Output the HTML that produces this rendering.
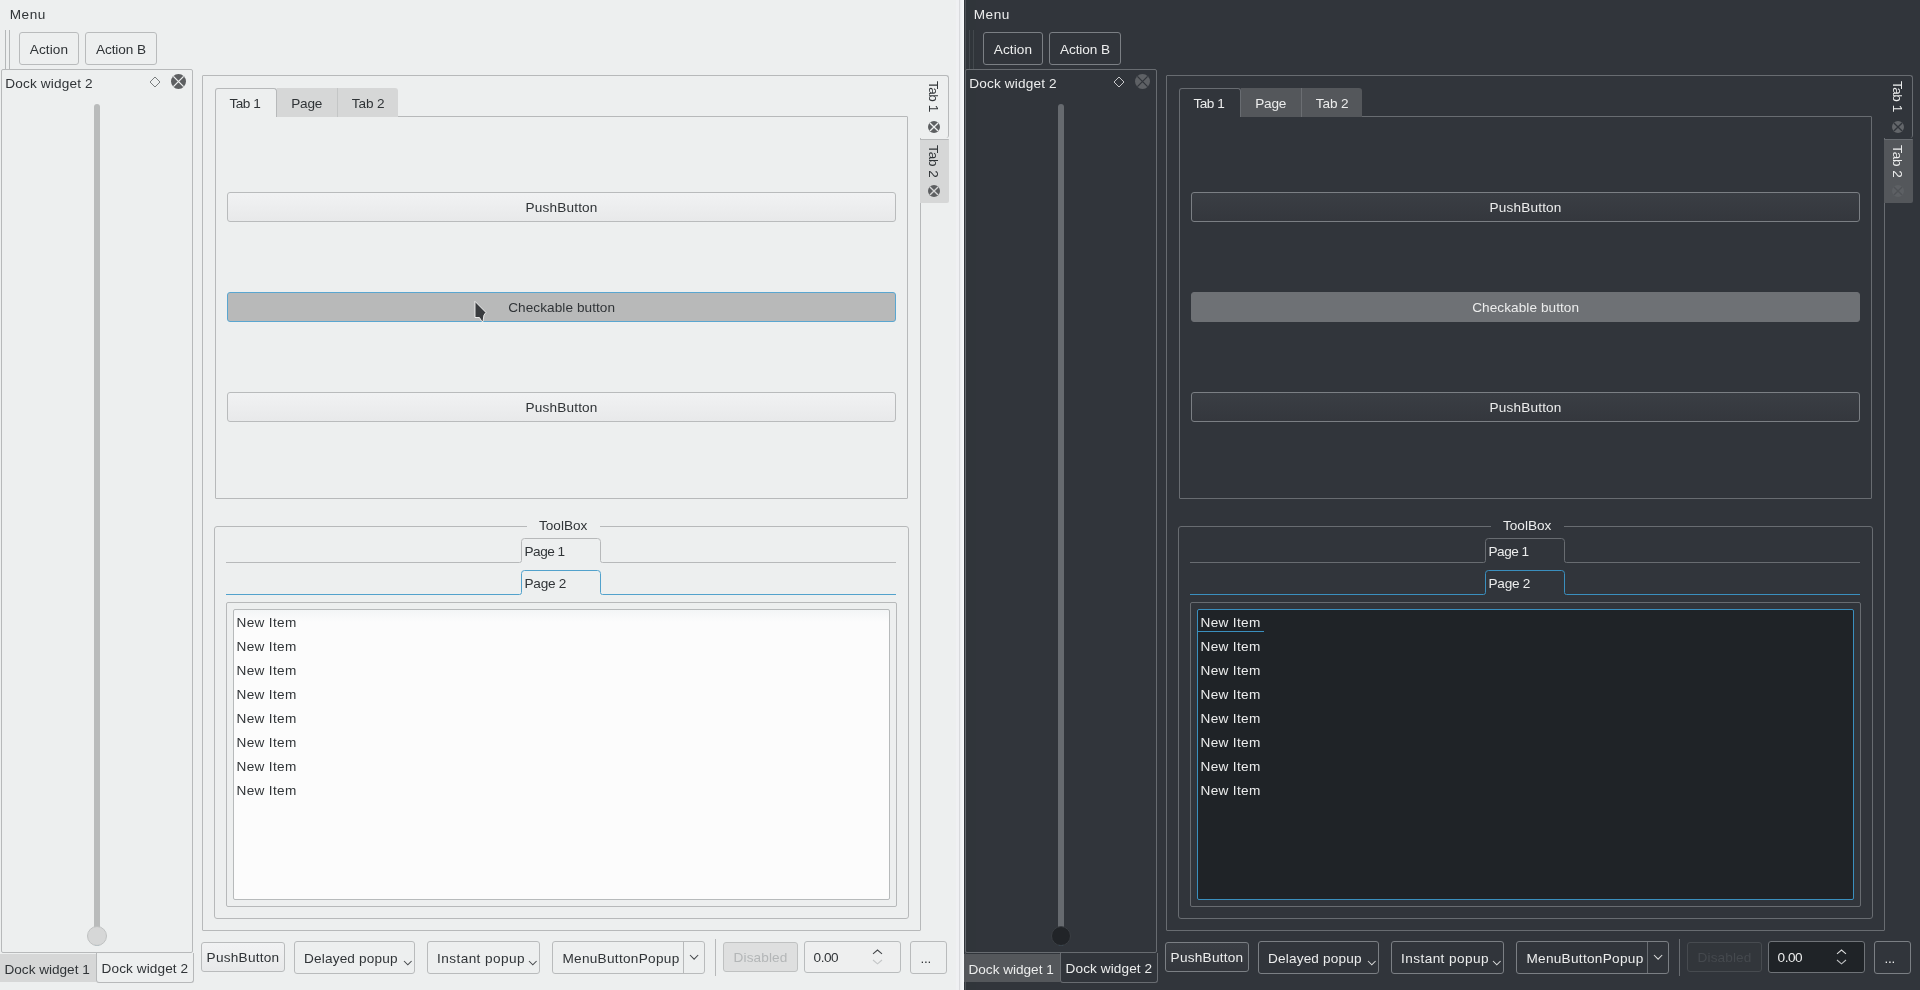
<!DOCTYPE html>
<html><head><meta charset="utf-8"><title>Breeze widgets</title>
<style>
html,body{margin:0;padding:0}
body{width:1920px;height:990px;overflow:hidden;position:relative;background:#31353b;font-family:"Liberation Sans", sans-serif;font-size:13.6px;line-height:16px}
.pane{position:absolute;top:0;height:990px;overflow:hidden;background:var(--bg);color:var(--fg)}
.pane *{position:absolute;box-sizing:border-box}
.light{left:0;width:964px;
 --bg:#edefef;--fg:#303437;--bd:#b7b9ba;--btnbd:#b9bbbc;--btn1:#f1f2f3;--btn2:#e8e9ea;--tabu:#d6d7d7;--tabsep:#c4c6c6;
 --view:#fcfcfc;--viewtop:#f3f5f6;--groove:#b9bbbb;--handle:#d6d7d7;--handlebd:#bfc1c1;--icon:#5d5f61;--iconx:#edefef;--dia:#6c6f71;
 --checked:#b8b9b9;--checkedbd:#5aa6d0;--hl:#52a2cc;--dis:#dedfdf;--disbd:#bfc1c1;--distxt:#b3b6b7;--chdis:#c3c6c7;--spin:#eeefef;--spinbd:#b9bcbd;--cl2:#5d5f61;--cl2x:#d6d7d7;--dockcl:#5d5f61;--viewbd:#b7babb;--chev:#44474a;--hline:#b4b7b8}
.dark{left:964px;width:956px;
 --bg:#31353b;--fg:#eceded;--bd:#686c71;--btnbd:#7b7f84;--btn1:#3a3e44;--btn2:#34373d;--tabu:#54575b;--tabsep:#6b6e72;
 --view:#1f2327;--viewtop:#1f2327;--groove:#666a6f;--handle:#212428;--handlebd:#3a3e43;--icon:#63666a;--iconx:#31353b;--dia:#d8d9da;
 --checked:#6e7175;--checkedbd:#6e7175;--hl:#3a8fbe;--dis:#32363b;--disbd:#474b50;--distxt:#45494e;--chdis:#bfc1c3;--spin:#1f2327;--spinbd:#6f7378;--cl2:#5d6064;--cl2x:#4f5256;--dockcl:#5e6165;--viewbd:#3a8fbe;--chev:#dcdddd;--hline:#43484d}
.layer{left:0;top:0;width:100%;height:100%;will-change:transform}
.t{white-space:nowrap;color:var(--fg)}
.t.rot{transform-origin:0 0;transform:rotate(90deg) translateY(-100%);}
.ln{background:var(--bd)}
.hln{background:var(--hline)}
.frame{border:1px solid var(--bd);border-radius:1px}
.frame.r3{border-radius:3px}
.frame.r2{border-radius:2px}
.btn{border:1px solid var(--btnbd);border-radius:3px;background:linear-gradient(var(--btn1),var(--btn2))}
.btn.flat{background:var(--bg)}
.btn.checked{background:var(--checked);border-color:var(--checkedbd)}
.btn.dis{background:var(--dis);border-color:var(--disbd)}
.distxt{color:var(--distxt)}
.spin{border:1px solid var(--spinbd);border-radius:3px;background:var(--spin)}
.tabu{background:var(--tabu)}
.docktabsel{border:1px solid var(--bd);border-top:none;border-radius:0 0 3px 3px}
.etabsel{border:1px solid var(--bd);border-left:none;border-bottom:none;border-radius:0 3px 3px 0;background:var(--bg)}
.etabu{background:var(--tabu);border-top:1px solid var(--bd);border-radius:0 1px 2px 0}
.ntabsel{border:1px solid var(--bd);border-bottom:none;border-radius:3px 3px 0 0;background:var(--bg)}
.ntabu{background:var(--tabu);border-radius:3px 3px 0 0}
.gap{background:var(--bg)}
.tbp{stroke:var(--bd);stroke-width:1;fill:none}
.hl .tbp{stroke:var(--hl)}
.view{border:1px solid var(--viewbd);border-radius:2px;background:linear-gradient(var(--viewtop),var(--view) 12px)}
.groove{background:var(--groove);border-radius:3px}
.groovefill{background:var(--hl);border-radius:0 0 3px 3px}
.handle{border-radius:50%;background:var(--handle);border:1px solid var(--handlebd)}
.ic{overflow:visible}
.ic.clip{overflow:hidden}
.clf{fill:var(--icon)}
.cl2 .clf{fill:var(--cl2)}
.dockcl .clf{fill:var(--dockcl)}
.cl2 .clx{stroke:var(--cl2x)}
.clx{stroke:var(--iconx);stroke-width:1.3;fill:none}
.dia{stroke:var(--dia);stroke-width:0.9;fill:none}
.chev{stroke:var(--chev);stroke-width:1.05;fill:none}
.chdis .chev{stroke:var(--chdis)}
.strip{left:960px;top:0;width:4px;height:990px;background:linear-gradient(90deg,#eaecee,#f7f9fb)}
.stripp{left:956px;top:0;width:3px;height:990px;background:#f0f1f3}
.stripl{left:959px;top:0;width:1px;height:990px;background:#d9dadd}
.ul{display:none;background:var(--hl)}
.dark .ul{display:block}
</style></head>
<body>
<div class="pane light"><div class="layer">
<span class="t " style="left:9.70px;top:7.09px;letter-spacing:0.552px;">Menu</span>
<div class="hln" style="left:5px;top:30px;width:1px;height:39px;"></div>
<div class="hln" style="left:9px;top:30px;width:1px;height:39px;"></div>
<div class="btn flat" style="left:19px;top:32px;width:60px;height:33px;"></div>
<span class="t " style="left:29.80px;top:41.99px;letter-spacing:0.076px;">Action</span>
<div class="btn flat" style="left:85px;top:32px;width:72px;height:33px;"></div>
<span class="t " style="left:96.00px;top:41.99px;letter-spacing:-0.094px;">Action B</span>
<div class="frame r2" style="left:1px;top:69px;width:192px;height:884px;"></div>
<span class="t " style="left:5.30px;top:75.89px;letter-spacing:0.157px;">Dock widget 2</span>
<svg class="ic" style="left:148px;top:75px" width="14" height="14" viewBox="-7 -7 14 14"><path d="M0 -5L5 0L0 5L-5 0Z" class="dia"/></svg>
<svg class="ic cl dockcl" style="left:169.70px;top:73.30px" width="17.0" height="17.0" viewBox="-8.5 -8.5 17.0 17.0"><circle cx="0" cy="0" r="7.5" class="clf"/><path d="M-5.10 -5.10L5.10 5.10M5.10 -5.10L-5.10 5.10" class="clx"/></svg>
<div class="groove" style="left:94px;top:104px;width:6px;height:838px;"></div>
<div class="groovefill" style="left:94px;top:938px;width:6px;height:8px;"></div>
<div class="handle" style="left:87px;top:926.3px;width:20px;height:20px;"></div>
<div class="tabu" style="left:0px;top:954px;width:96px;height:28px;"></div>
<span class="t " style="left:4.50px;top:961.89px;letter-spacing:-0.010px;">Dock widget 1</span>
<div class="docktabsel" style="left:96px;top:953px;width:98px;height:30px;"></div>
<span class="t " style="left:101.60px;top:960.79px;letter-spacing:0.098px;">Dock widget 2</span>
<div class="frame" style="left:202px;top:75px;width:719px;height:856px;"></div>
<div class="etabsel" style="left:920px;top:75px;width:29px;height:63px;"></div>
<div class="etabu" style="left:920px;top:139px;width:29px;height:64px;"></div>
<span class="t rot" style="left:925.11px;top:81.30px;letter-spacing:-0.500px;">Tab 1</span>
<span class="t rot" style="left:925.11px;top:145.20px;letter-spacing:-0.123px;">Tab 2</span>
<svg class="ic cl" style="left:927.00px;top:120.00px" width="14" height="14" viewBox="-7 -7 14 14"><circle cx="0" cy="0" r="6" class="clf"/><path d="M-4.08 -4.08L4.08 4.08M4.08 -4.08L-4.08 4.08" class="clx"/></svg>
<svg class="ic cl cl2" style="left:927.00px;top:183.60px" width="14" height="14" viewBox="-7 -7 14 14"><circle cx="0" cy="0" r="6" class="clf"/><path d="M-4.08 -4.08L4.08 4.08M4.08 -4.08L-4.08 4.08" class="clx"/></svg>
<div class="frame" style="left:215px;top:116px;width:693px;height:383px;"></div>
<div class="ntabsel" style="left:215px;top:88px;width:62px;height:29px;"></div>
<div class="ntabu" style="left:277px;top:88px;width:60px;height:28.5px;border-radius:0;"></div>
<div class="ntabu" style="left:337px;top:88px;width:61px;height:28.5px;border-left:1px solid var(--tabsep);border-radius:0 3px 0 0;"></div>
<span class="t " style="left:229.40px;top:96.19px;letter-spacing:-0.473px;">Tab 1</span>
<span class="t " style="left:291.20px;top:96.19px;letter-spacing:-0.196px;">Page</span>
<span class="t " style="left:351.80px;top:96.19px;letter-spacing:-0.123px;">Tab 2</span>
<div class="btn" style="left:227px;top:192px;width:669px;height:30px;"></div>
<span class="t " style="left:525.60px;top:199.99px;letter-spacing:0.164px;">PushButton</span>
<div class="btn checked" style="left:227px;top:292px;width:669px;height:30px;"></div>
<span class="t " style="left:508.20px;top:299.99px;letter-spacing:0.070px;">Checkable button</span>
<div class="btn" style="left:227px;top:392px;width:669px;height:30px;"></div>
<span class="t " style="left:525.60px;top:399.99px;letter-spacing:0.164px;">PushButton</span>
<div class="frame r3" style="left:214px;top:526px;width:695px;height:393px;"></div>
<div class="gap" style="left:527px;top:525px;width:73px;height:3px;"></div>
<span class="t " style="left:539.00px;top:517.89px;letter-spacing:-0.011px;">ToolBox</span>
<svg class="ic " style="left:0;top:0" width="964" height="990" viewBox="0 0 964 990"><path d="M226 562.5H519.5Q521.5 562.5 521.5 560.5V541.5Q521.5 538.5 524.5 538.5H597.5Q600.5 538.5 600.5 541.5V560.5Q600.5 562.5 602.5 562.5H896" class="tbp"/></svg>
<span class="t " style="left:524.50px;top:543.99px;letter-spacing:-0.500px;">Page 1</span>
<svg class="ic hl" style="left:0;top:0" width="964" height="990" viewBox="0 0 964 990"><path d="M226 594.5H519.5Q521.5 594.5 521.5 592.5V573.5Q521.5 570.5 524.5 570.5H597.5Q600.5 570.5 600.5 573.5V592.5Q600.5 594.5 602.5 594.5H896" class="tbp"/></svg>
<span class="t " style="left:524.50px;top:575.89px;letter-spacing:-0.245px;">Page 2</span>
<div class="frame r2" style="left:226px;top:602px;width:671px;height:305px;"></div>
<div class="view" style="left:233px;top:609px;width:657px;height:291px;"><span class="t first" style="left:2.60px;top:4.89px;letter-spacing:0.316px;">New Item</span><span class="t " style="left:2.60px;top:28.89px;letter-spacing:0.316px;">New Item</span><span class="t " style="left:2.60px;top:52.89px;letter-spacing:0.316px;">New Item</span><span class="t " style="left:2.60px;top:76.89px;letter-spacing:0.316px;">New Item</span><span class="t " style="left:2.60px;top:100.89px;letter-spacing:0.316px;">New Item</span><span class="t " style="left:2.60px;top:124.89px;letter-spacing:0.316px;">New Item</span><span class="t " style="left:2.60px;top:148.89px;letter-spacing:0.316px;">New Item</span><span class="t " style="left:2.60px;top:172.89px;letter-spacing:0.316px;">New Item</span><div class="ul" style="left:0px;top:21px;width:66px;height:1px;"></div></div>
<div class="btn" style="left:201px;top:942px;width:84px;height:30px;"></div>
<span class="t " style="left:206.60px;top:949.99px;letter-spacing:0.253px;">PushButton</span>
<div class="btn flat" style="left:294px;top:941px;width:121px;height:33px;"></div>
<span class="t " style="left:304.10px;top:950.79px;letter-spacing:0.159px;">Delayed popup</span>
<svg class="ic " style="left:401.70px;top:959.20px" width="11.6" height="7.8" viewBox="-5.8 -3.9 11.6 7.8"><path d="M-3.8 -1.9L0 1.9L3.8 -1.9" class="chev"/></svg>
<div class="btn flat" style="left:427px;top:941px;width:113px;height:33px;"></div>
<span class="t " style="left:437.00px;top:950.89px;letter-spacing:0.431px;">Instant popup</span>
<svg class="ic " style="left:526.50px;top:959.20px" width="11.6" height="7.8" viewBox="-5.8 -3.9 11.6 7.8"><path d="M-3.8 -1.9L0 1.9L3.8 -1.9" class="chev"/></svg>
<div class="btn flat" style="left:552px;top:941px;width:153px;height:33px;"></div>
<div class="ln" style="left:683px;top:942px;width:1px;height:31px;"></div>
<span class="t " style="left:562.40px;top:950.99px;letter-spacing:0.303px;">MenuButtonPopup</span>
<svg class="ic " style="left:688.10px;top:953.20px" width="12.2" height="8.2" viewBox="-6.1 -4.1 12.2 8.2"><path d="M-4.1 -2.1L0 2.1L4.1 -2.1" class="chev"/></svg>
<div class="ln" style="left:715px;top:939px;width:1px;height:37px;"></div>
<div class="btn dis" style="left:723px;top:942px;width:75px;height:30px;"></div>
<span class="t distxt" style="left:733.60px;top:950.09px;letter-spacing:0.124px;">Disabled</span>
<div class="spin" style="left:804px;top:941px;width:97px;height:32px;"></div>
<span class="t " style="left:813.60px;top:950.09px;letter-spacing:-0.500px;">0.00</span>
<svg class="ic " style="left:870.60px;top:948.20px" width="13" height="7.8" viewBox="-6.5 -3.9 13 7.8"><path d="M-4.5 1.9L0 -1.9L4.5 1.9" class="chev"/></svg>
<svg class="ic chdis" style="left:870.60px;top:958.20px" width="13" height="7.8" viewBox="-6.5 -3.9 13 7.8"><path d="M-4.5 -1.9L0 1.9L4.5 -1.9" class="chev"/></svg>
<div class="btn flat" style="left:910px;top:941px;width:37px;height:33px;"></div>
<span class="t " style="left:920.40px;top:951.19px;letter-spacing:-0.227px;">...</span>
<svg class="ic" style="left:470px;top:297.2px;overflow:hidden" width="22" height="24.5" viewBox="0 0 22 24.5"><path d="M5 4.4L5 20.5L9.4 20.5L12 24.6L13 24.6L13.9 18.3L15.9 15.4Z" fill="#3a3c3f" stroke="#f6f6f6" stroke-width="0.9" stroke-linejoin="round"/></svg>
</div>
<div class="stripp"></div><div class="stripl"></div><div class="strip"></div>
</div>
<div class="pane dark">
<div style="left:0;top:0;width:12px;height:990px;background:#30353a"></div><div style="left:1px;top:0;width:1px;height:990px;background:#4e5257"></div>
<div class="layer">
<span class="t " style="left:9.70px;top:7.09px;letter-spacing:0.552px;">Menu</span>
<div class="hln" style="left:5px;top:30px;width:1px;height:39px;"></div>
<div class="hln" style="left:9px;top:30px;width:1px;height:39px;"></div>
<div class="btn flat" style="left:19px;top:32px;width:60px;height:33px;"></div>
<span class="t " style="left:29.80px;top:41.99px;letter-spacing:0.076px;">Action</span>
<div class="btn flat" style="left:85px;top:32px;width:72px;height:33px;"></div>
<span class="t " style="left:96.00px;top:41.99px;letter-spacing:-0.094px;">Action B</span>
<div class="frame r2" style="left:1px;top:69px;width:192px;height:884px;"></div>
<span class="t " style="left:5.30px;top:75.89px;letter-spacing:0.157px;">Dock widget 2</span>
<svg class="ic" style="left:148px;top:75px" width="14" height="14" viewBox="-7 -7 14 14"><path d="M0 -5L5 0L0 5L-5 0Z" class="dia"/></svg>
<svg class="ic cl dockcl" style="left:169.70px;top:73.30px" width="17.0" height="17.0" viewBox="-8.5 -8.5 17.0 17.0"><circle cx="0" cy="0" r="7.5" class="clf"/><path d="M-5.10 -5.10L5.10 5.10M5.10 -5.10L-5.10 5.10" class="clx"/></svg>
<div class="groove" style="left:94px;top:104px;width:6px;height:838px;"></div>
<div class="groovefill" style="left:94px;top:938px;width:6px;height:8px;"></div>
<div class="handle" style="left:87px;top:926.3px;width:20px;height:20px;"></div>
<div class="tabu" style="left:0px;top:954px;width:96px;height:28px;"></div>
<span class="t " style="left:4.50px;top:961.89px;letter-spacing:-0.010px;">Dock widget 1</span>
<div class="docktabsel" style="left:96px;top:953px;width:98px;height:30px;"></div>
<span class="t " style="left:101.60px;top:960.79px;letter-spacing:0.098px;">Dock widget 2</span>
<div class="frame" style="left:202px;top:75px;width:719px;height:856px;"></div>
<div class="etabsel" style="left:920px;top:75px;width:29px;height:63px;"></div>
<div class="etabu" style="left:920px;top:139px;width:29px;height:64px;"></div>
<span class="t rot" style="left:925.11px;top:81.30px;letter-spacing:-0.500px;">Tab 1</span>
<span class="t rot" style="left:925.11px;top:145.20px;letter-spacing:-0.123px;">Tab 2</span>
<svg class="ic cl" style="left:927.00px;top:120.00px" width="14" height="14" viewBox="-7 -7 14 14"><circle cx="0" cy="0" r="6" class="clf"/><path d="M-4.08 -4.08L4.08 4.08M4.08 -4.08L-4.08 4.08" class="clx"/></svg>
<svg class="ic cl cl2" style="left:927.00px;top:183.60px" width="14" height="14" viewBox="-7 -7 14 14"><circle cx="0" cy="0" r="6" class="clf"/><path d="M-4.08 -4.08L4.08 4.08M4.08 -4.08L-4.08 4.08" class="clx"/></svg>
<div class="frame" style="left:215px;top:116px;width:693px;height:383px;"></div>
<div class="ntabsel" style="left:215px;top:88px;width:62px;height:29px;"></div>
<div class="ntabu" style="left:277px;top:88px;width:60px;height:28.5px;border-radius:0;"></div>
<div class="ntabu" style="left:337px;top:88px;width:61px;height:28.5px;border-left:1px solid var(--tabsep);border-radius:0 3px 0 0;"></div>
<span class="t " style="left:229.40px;top:96.19px;letter-spacing:-0.473px;">Tab 1</span>
<span class="t " style="left:291.20px;top:96.19px;letter-spacing:-0.196px;">Page</span>
<span class="t " style="left:351.80px;top:96.19px;letter-spacing:-0.123px;">Tab 2</span>
<div class="btn" style="left:227px;top:192px;width:669px;height:30px;"></div>
<span class="t " style="left:525.60px;top:199.99px;letter-spacing:0.164px;">PushButton</span>
<div class="btn checked" style="left:227px;top:292px;width:669px;height:30px;"></div>
<span class="t " style="left:508.20px;top:299.99px;letter-spacing:0.070px;">Checkable button</span>
<div class="btn" style="left:227px;top:392px;width:669px;height:30px;"></div>
<span class="t " style="left:525.60px;top:399.99px;letter-spacing:0.164px;">PushButton</span>
<div class="frame r3" style="left:214px;top:526px;width:695px;height:393px;"></div>
<div class="gap" style="left:527px;top:525px;width:73px;height:3px;"></div>
<span class="t " style="left:539.00px;top:517.89px;letter-spacing:-0.011px;">ToolBox</span>
<svg class="ic " style="left:0;top:0" width="964" height="990" viewBox="0 0 964 990"><path d="M226 562.5H519.5Q521.5 562.5 521.5 560.5V541.5Q521.5 538.5 524.5 538.5H597.5Q600.5 538.5 600.5 541.5V560.5Q600.5 562.5 602.5 562.5H896" class="tbp"/></svg>
<span class="t " style="left:524.50px;top:543.99px;letter-spacing:-0.500px;">Page 1</span>
<svg class="ic hl" style="left:0;top:0" width="964" height="990" viewBox="0 0 964 990"><path d="M226 594.5H519.5Q521.5 594.5 521.5 592.5V573.5Q521.5 570.5 524.5 570.5H597.5Q600.5 570.5 600.5 573.5V592.5Q600.5 594.5 602.5 594.5H896" class="tbp"/></svg>
<span class="t " style="left:524.50px;top:575.89px;letter-spacing:-0.245px;">Page 2</span>
<div class="frame r2" style="left:226px;top:602px;width:671px;height:305px;"></div>
<div class="view" style="left:233px;top:609px;width:657px;height:291px;"><span class="t first" style="left:2.60px;top:4.89px;letter-spacing:0.316px;">New Item</span><span class="t " style="left:2.60px;top:28.89px;letter-spacing:0.316px;">New Item</span><span class="t " style="left:2.60px;top:52.89px;letter-spacing:0.316px;">New Item</span><span class="t " style="left:2.60px;top:76.89px;letter-spacing:0.316px;">New Item</span><span class="t " style="left:2.60px;top:100.89px;letter-spacing:0.316px;">New Item</span><span class="t " style="left:2.60px;top:124.89px;letter-spacing:0.316px;">New Item</span><span class="t " style="left:2.60px;top:148.89px;letter-spacing:0.316px;">New Item</span><span class="t " style="left:2.60px;top:172.89px;letter-spacing:0.316px;">New Item</span><div class="ul" style="left:0px;top:21px;width:66px;height:1px;"></div></div>
<div class="btn" style="left:201px;top:942px;width:84px;height:30px;"></div>
<span class="t " style="left:206.60px;top:949.99px;letter-spacing:0.253px;">PushButton</span>
<div class="btn flat" style="left:294px;top:941px;width:121px;height:33px;"></div>
<span class="t " style="left:304.10px;top:950.79px;letter-spacing:0.159px;">Delayed popup</span>
<svg class="ic " style="left:401.70px;top:959.20px" width="11.6" height="7.8" viewBox="-5.8 -3.9 11.6 7.8"><path d="M-3.8 -1.9L0 1.9L3.8 -1.9" class="chev"/></svg>
<div class="btn flat" style="left:427px;top:941px;width:113px;height:33px;"></div>
<span class="t " style="left:437.00px;top:950.89px;letter-spacing:0.431px;">Instant popup</span>
<svg class="ic " style="left:526.50px;top:959.20px" width="11.6" height="7.8" viewBox="-5.8 -3.9 11.6 7.8"><path d="M-3.8 -1.9L0 1.9L3.8 -1.9" class="chev"/></svg>
<div class="btn flat" style="left:552px;top:941px;width:153px;height:33px;"></div>
<div class="ln" style="left:683px;top:942px;width:1px;height:31px;"></div>
<span class="t " style="left:562.40px;top:950.99px;letter-spacing:0.303px;">MenuButtonPopup</span>
<svg class="ic " style="left:688.10px;top:953.20px" width="12.2" height="8.2" viewBox="-6.1 -4.1 12.2 8.2"><path d="M-4.1 -2.1L0 2.1L4.1 -2.1" class="chev"/></svg>
<div class="ln" style="left:715px;top:939px;width:1px;height:37px;"></div>
<div class="btn dis" style="left:723px;top:942px;width:75px;height:30px;"></div>
<span class="t distxt" style="left:733.60px;top:950.09px;letter-spacing:0.124px;">Disabled</span>
<div class="spin" style="left:804px;top:941px;width:97px;height:32px;"></div>
<span class="t " style="left:813.60px;top:950.09px;letter-spacing:-0.500px;">0.00</span>
<svg class="ic " style="left:870.60px;top:948.20px" width="13" height="7.8" viewBox="-6.5 -3.9 13 7.8"><path d="M-4.5 1.9L0 -1.9L4.5 1.9" class="chev"/></svg>
<svg class="ic chdis" style="left:870.60px;top:958.20px" width="13" height="7.8" viewBox="-6.5 -3.9 13 7.8"><path d="M-4.5 -1.9L0 1.9L4.5 -1.9" class="chev"/></svg>
<div class="btn flat" style="left:910px;top:941px;width:37px;height:33px;"></div>
<span class="t " style="left:920.40px;top:951.19px;letter-spacing:-0.227px;">...</span>
</div>
</div>
</body></html>
